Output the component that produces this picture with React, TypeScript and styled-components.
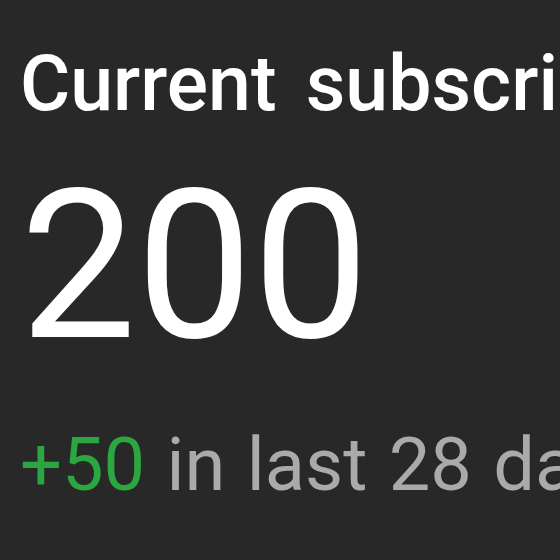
import React from 'react';
import styled, { createGlobalStyle } from 'styled-components';

const GlobalStyle = createGlobalStyle`
    html, body {
        margin: 0;
        padding: 0;
        background-color: #282828;
    }
`;

const Card = styled.div`
    width: 560px;
    height: 560px;
    box-sizing: border-box;
    padding: 44px 0 0 20px;
    display: flex;
    flex-direction: column;
    overflow: hidden;
    background-color: #282828;
    font-family: Roboto, 'Liberation Sans', sans-serif;
    white-space: nowrap;
`;

const Title = styled.div`
    font-size: 77px;
    line-height: 80px;
    font-weight: 500;
    word-spacing: 10px;
    color: #ffffff;
`;

const Value = styled.div`
    margin-top: 39px;
    font-size: 207px;
    line-height: 207px;
    font-weight: 400;
    color: #ffffff;
`;

const Change = styled.div`
    margin-top: 58px;
    font-size: 74px;
    line-height: 74px;
    word-spacing: 3px;
    color: #aaaaaa;
`;

const Delta = styled.span<{ positive?: boolean }>`
    color: ${({ positive }) => (positive ? '#2ba640' : '#cc0000')};
`;

const App = () => {
    return (
        <>
            <GlobalStyle />
            <Card>
                <Title>Current subscribers</Title>
                <Value>200</Value>
                <Change>
                    <Delta positive>+50</Delta> in last 28 days
                </Change>
            </Card>
        </>
    );
};

export default App;
